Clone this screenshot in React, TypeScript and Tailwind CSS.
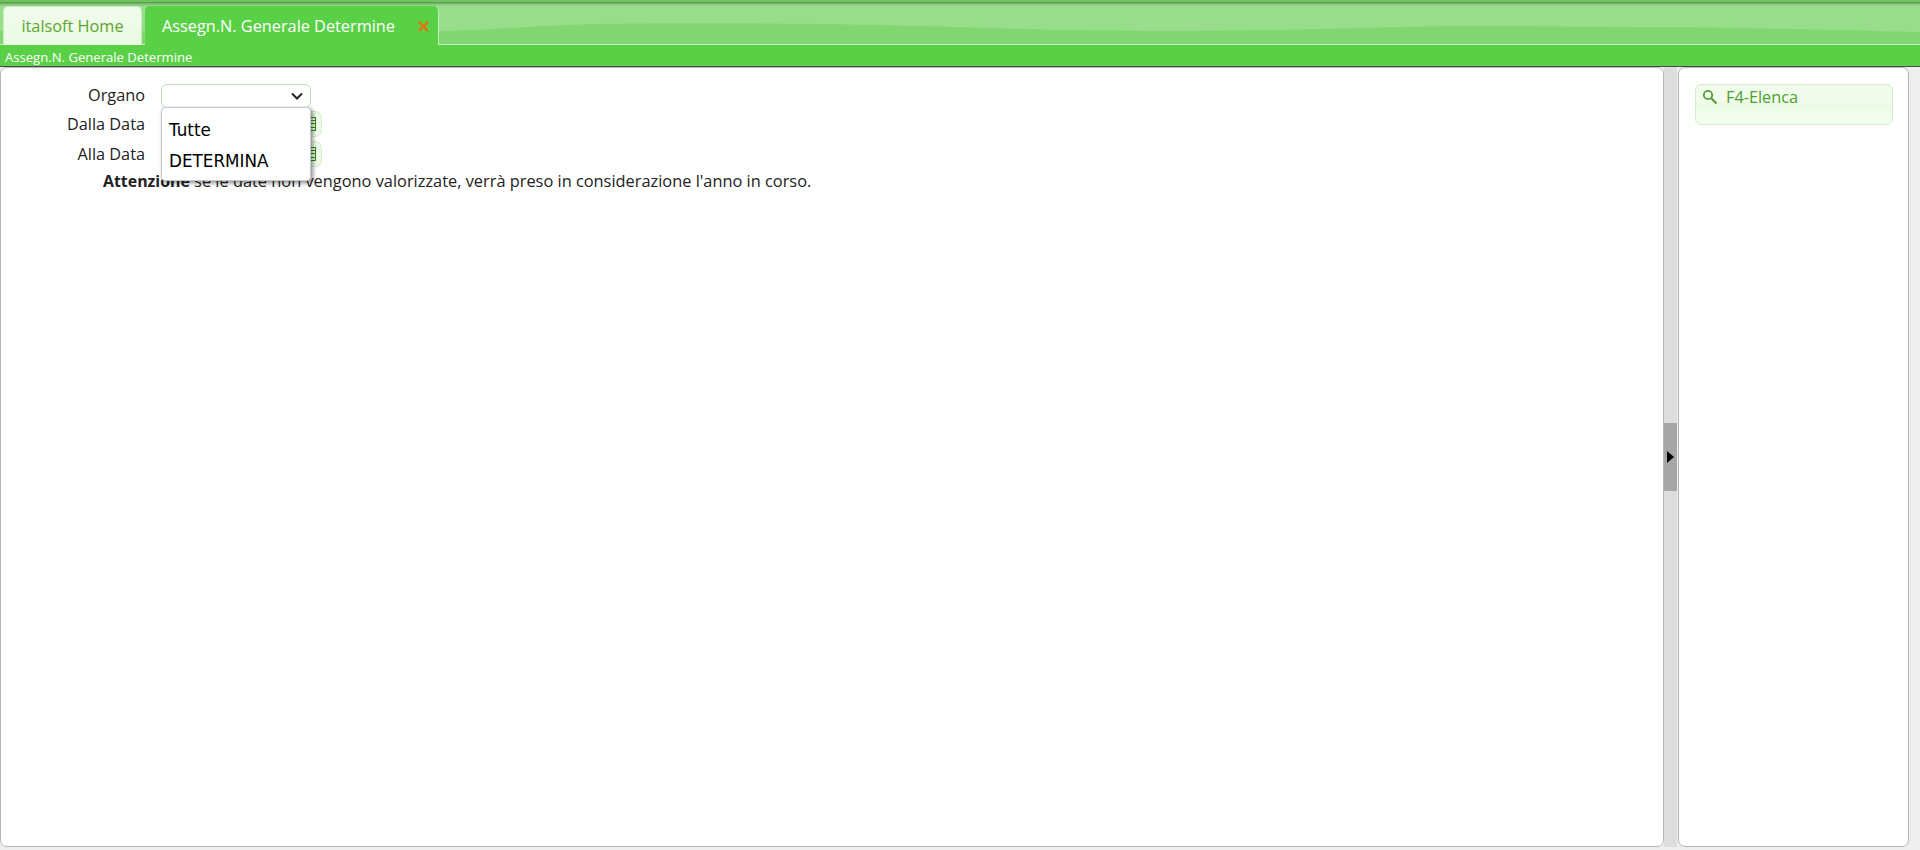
const CalendarIcon = () => (
  <svg width="12" height="14" viewBox="0 0 12 14" fill="none" stroke="#2f8f10" strokeWidth="1" shapeRendering="crispEdges" className="shrink-0">
    <rect x="0.5" y="0.5" width="10" height="13" />
    <path d="M0.5 3.5h10M0.5 6.5h10M0.5 10.5h10M5.5 3.5v10" />
  </svg>
);

const SearchIcon = () => (
  <svg width="16" height="16" viewBox="0 0 16 16" fill="none" stroke="#4f9e3a" className="shrink-0 mt-[4px]">
    <circle cx="6" cy="6" r="4.2" strokeWidth="1.8" />
    <path d="M9 9L14.5 14.5" strokeWidth="2.2" />
  </svg>
);

const DateRow = ({ label }: { label: string }) => (
  <div className="flex items-center h-[30px]">
    <label className="w-[145px] text-right">{label}</label>
    <div className="ml-[16px] w-[150px] h-[26px] rounded-[5px] border border-[#bde5b0] bg-white" />
    <button className="flex items-center justify-end pr-[4px] w-[11px] h-[26px] rounded-r-[7px] border border-l-0 border-[#d4efca] bg-[#eefbe8]">
      <CalendarIcon />
    </button>
  </div>
);

export default function App() {
  return (
    <div className="flex flex-col h-[850px] overflow-hidden bg-[#eeeeee] text-[#222222] text-[16.3px] font-['Open_Sans',sans-serif]">
      {/* Tab bar */}
      <div className="relative h-[45px] shrink-0 bg-[#82d672] border-t-2 border-[#6fc45f]">
        <svg className="absolute inset-0 w-full h-full" viewBox="0 0 1920 43" preserveAspectRatio="none">
          <path d="M0 0H1920V30C1820 28 1720 25 1640 25C1560 25 1480 23 1400 25C1300 28 1230 29 1150 29C1060 29 1000 26 880 23C780 21 660 21 600 22C540 23 480 29 440 29H0Z" fill="#98dd8a" />
          <path d="M0 42.5H1920" stroke="#c6efbe" strokeWidth="1" />
        </svg>
        <div className="absolute inset-x-0 top-0 h-[1px] bg-[#5f9a52]" />
        <div className="absolute inset-x-0 top-[1px] h-[3px] bg-gradient-to-b from-[#71ae64] to-[#96dd88]" />
        <div className="relative flex items-stretch gap-[3px] pl-[3px] pt-[4px] h-full">
          <a className="flex items-center justify-center w-[139px] h-[39px] rounded-t-[5px] border border-b-0 border-[#c9efc1] bg-gradient-to-b from-[#f1fcec] to-[#eafae3] text-[#5da52d]">
            italsoft Home
          </a>
          <a className="relative flex items-center w-[294px] h-[39px] pl-[17px] pt-[2px] rounded-t-[5px] border-r border-[#c6efbe] bg-[#59d046] text-white">
            Assegn.N. Generale Determine
            <svg className="absolute right-[9px] top-[15px]" width="11" height="11" viewBox="0 0 11 11" stroke="#e8700e" strokeWidth="2.4">
              <path d="M1 1L10 10M10 1L1 10" />
            </svg>
          </a>
        </div>
      </div>

      {/* Title strip */}
      <div className="h-[22px] shrink-0 pl-[5px] pt-[2px] bg-[#59d046] border-b border-[#4a4a4a] text-white text-[13.1px] leading-[20px]">
        Assegn.N. Generale Determine
      </div>

      {/* Workspace */}
      <div className="flex flex-1 pb-[3px] pr-[11px]">
        <main className="relative flex-1 pt-[16px] rounded-[7px] border border-[#b5b5b5] bg-white">
          <div className="flex items-center h-[24px] -ml-px">
            <label className="w-[145px] pb-[2px] text-right">Organo</label>
            <div className="relative ml-[16px] w-[150px] h-[24px] rounded-[6px] border border-[#b9e8ae] bg-white">
              <svg className="absolute right-[7px] top-[7px]" width="12" height="9" viewBox="0 0 12 9" fill="none" stroke="#222222" strokeWidth="2">
                <path d="M1 1.5L6 6.5L11 1.5" />
              </svg>
              {/* Open options list */}
              <div className="absolute z-10 -left-px top-[22px] w-[150px] h-[74px] pt-[7px] pl-[7px] rounded-[4px] border border-[#c8c8d0] bg-white shadow-[2px_2px_4px_rgba(0,0,0,0.45)] text-black text-[16.8px] font-['DejaVu_Sans',sans-serif]">
                <div className="h-[31px] leading-[31px]">Tutte</div>
                <div className="h-[31px] leading-[31px]">DETERMINA</div>
              </div>
            </div>
          </div>
          <div className="-ml-px pt-[1px]">
            <DateRow label="Dalla Data" />
            <DateRow label="Alla Data" />
          </div>
          <p className="pl-[102px] -mt-[1px] text-[16.36px] leading-[26px]">
            <b className="text-[15.9px]">Attenzione</b> se le date non vengono valorizzate, verrà preso in considerazione l'anno in corso.
          </p>
        </main>

        {/* Splitter */}
        <div className="flex items-center w-[14px] bg-[#dddddd] border-r border-[#eeeeee]">
          <div className="flex items-center justify-center w-[13px] h-[68px] bg-[#a6a6a6]">
            <div className="w-0 h-0 border-y-[6px] border-y-transparent border-l-[7px] border-l-black" />
          </div>
        </div>

        <aside className="w-[231px] pt-[16px] px-[16px] rounded-[7px] border border-[#b5b5b5] bg-white">
          <button className="flex items-start gap-[8px] w-[198px] h-[41px] pl-[6px] rounded-[6px] border border-[#d4efca] bg-gradient-to-b from-[#f1fcec] from-40% via-[#e9fae2] via-55% to-[#f3fdee] to-75% text-[#4ca02c] leading-[24px] text-left">
            <SearchIcon />
            F4-Elenca
          </button>
        </aside>
      </div>
    </div>
  );
}
